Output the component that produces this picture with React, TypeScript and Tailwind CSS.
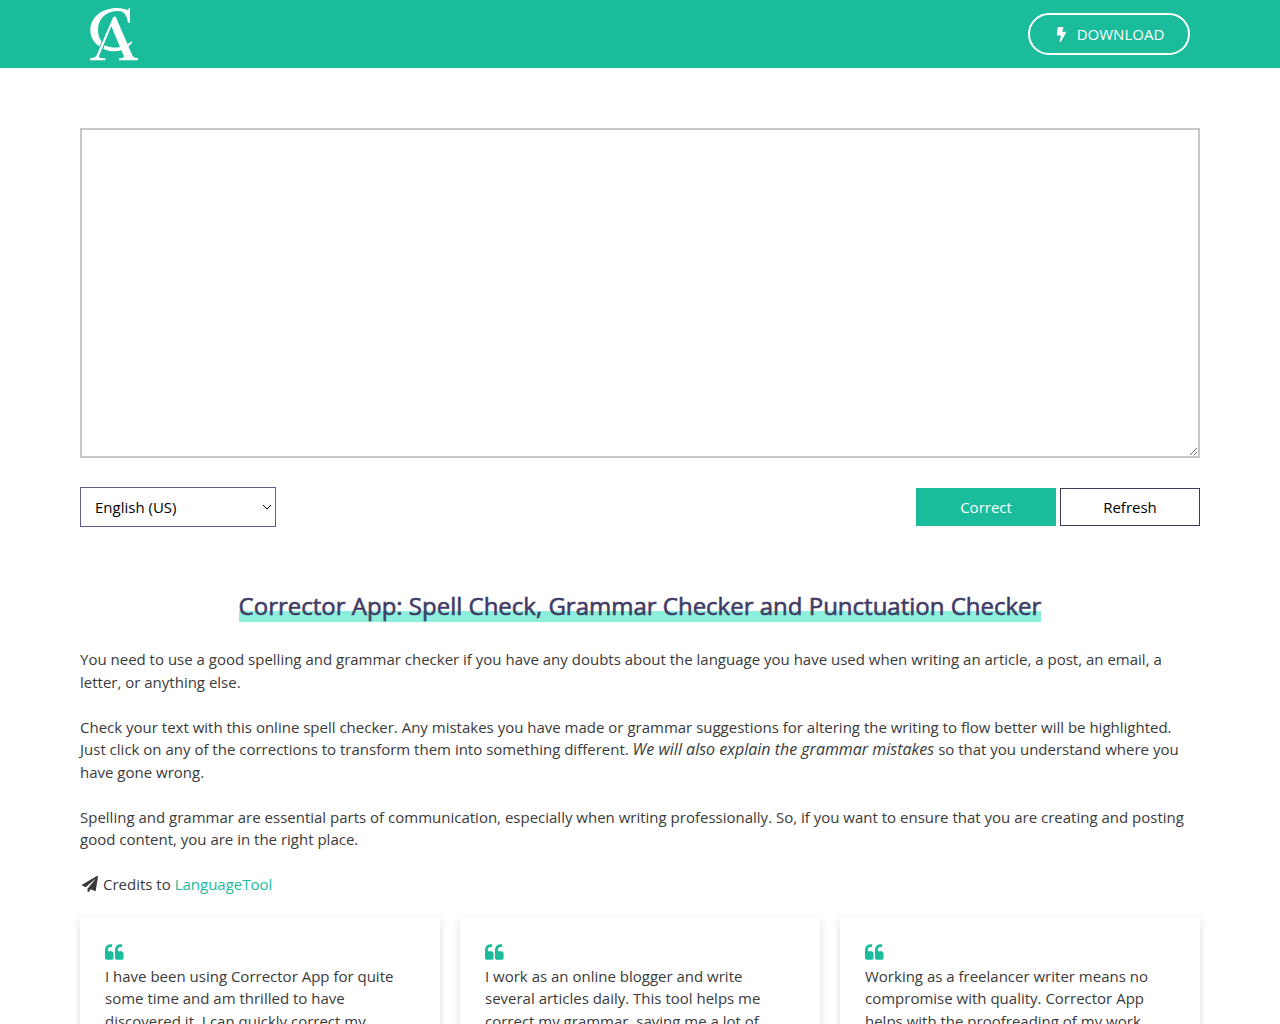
import React from "react";
import { FaBolt, FaPaperPlane } from "react-icons/fa";

const languages = ["English (US)", "English (GB)", "Deutsch", "Español", "Français", "Italiano", "Português"];

const reviews = [
  "I have been using Corrector App for quite some time and am thrilled to have discovered it. I can quickly correct my writing in just a few clicks.",
  "I work as an online blogger and write several articles daily. This tool helps me correct my grammar, saving me a lot of trouble and effort.",
  "Working as a freelancer writer means no compromise with quality. Corrector App helps with the proofreading of my work every day.",
];

function Logo() {
  return (
    <svg viewBox="30 21 150 162" className="h-[54px] w-[50px]" role="img" aria-label="Corrector App" fill="#fff">
      <path d="M150 24V68H144C140 45 132 33 116 33C78 33 54 56 54 90C54 106 59 118 67 128L61 141C42 130 31 112 31 90C31 52 66 24 112 24C126 24 136 27 141 30C144 30 146 27 147 24Z" />
      <path
        d="M100 50H107L157 166Q161 175 174 175V181H117V175Q134 175 131 167L94 79L57 168Q54 175 76 175V181H30V175Q45 175 50 166Z"
        stroke="#1abc9c"
        strokeWidth="5"
        paintOrder="stroke"
      />
      <path d="M74 136C98 147 130 146 154 124L157 127C138 155 100 161 70 146Z" />
    </svg>
  );
}

function QuoteIcon() {
  const mark =
    "M768 960v384q0 80-56 136t-136 56h-384q-80 0-136-56t-56-136v-704q0-104 40.5-198.5t109.5-163.5 163.5-109.5 198.5-40.5h64q26 0 45 19t19 45v128q0 26-19 45t-45 19h-64q-106 0-181 75t-75 181v32q0 40 28 68t68 28h224q80 0 136 56t56 136z";
  return (
    <svg viewBox="0 -64 1792 1792" className="mb-[3px] size-5" fill="#1abc9c" aria-hidden="true">
      <path d={mark} />
      <path d={mark} transform="translate(896 0)" />
    </svg>
  );
}

export default function App() {
  return (
    <div className="min-h-screen overflow-x-hidden bg-white font-['Open_Sans',sans-serif] text-[15px] leading-normal text-[#3a3a3a]">
      <header className="bg-[#1abc9c]">
        <div className="mx-auto flex h-[68px] max-w-[1120px] items-center justify-between px-2.5">
          <a href="#home">
            <Logo />
          </a>
          <a href="#download" className="flex h-[42px] w-[162px] items-center justify-center gap-2 rounded-full border-2 border-white text-white">
            <FaBolt className="size-[15px]" />
            <span>DOWNLOAD</span>
          </a>
        </div>
      </header>

      <main className="mx-auto max-w-[1120px] pt-[60px]">
        <textarea aria-label="Text to correct" className="block h-[330px] w-full border-2 border-[#c8c8c8] p-3 outline-none" />

        <div className="mt-[29px] flex items-center justify-between">
          <div className="relative">
            <select aria-label="Language" className="h-10 w-[196px] appearance-none border border-[#625e8b] bg-white px-3.5 text-black">
              {languages.map((name) => (
                <option key={name}>{name}</option>
              ))}
            </select>
            <svg viewBox="0 0 10 6" className="pointer-events-none absolute top-[17px] right-1 h-1.5 w-2.5" fill="none" stroke="#000" aria-hidden="true">
              <path d="M1 1L5 5L9 1" />
            </svg>
          </div>
          <div className="flex gap-1">
            <button type="button" className="h-[38px] w-[140px] bg-[#1abc9c] text-white">Correct</button>
            <button type="button" className="h-[38px] w-[140px] border border-[#3b3a60] bg-white text-black">Refresh</button>
          </div>
        </div>

        <h1 className="mt-[60px] text-center text-[24px] leading-[38px] text-[#3f3d66] [-webkit-text-stroke:0.6px_#3f3d66]">
          <span className="bg-linear-to-b from-transparent from-66% to-[#8deedb] to-66%">
            Corrector App: Spell Check, Grammar Checker and Punctuation Checker
          </span>
        </h1>

        <div className="mt-[23px] space-y-[1.5em]">
          <p>
            You need to use a good spelling and grammar checker if you have any doubts about the language you have used when writing an article, a post, an email, a letter, or anything else.
          </p>
          <p>
            Check your text with this online spell checker. Any mistakes you have made or grammar suggestions for altering the writing to flow better will be highlighted. Just click on any of the corrections to transform them into something different. <em className="text-[16px] leading-none">We will also explain the grammar mistakes</em> so that you understand where you have gone wrong.
          </p>
          <p>
            Spelling and grammar are essential parts of communication, especially when writing professionally. So, if you want to ensure that you are creating and posting good content, you are in the right place.
          </p>
          <p className="flex items-center gap-[5px]">
            <FaPaperPlane className="ml-0.5 size-4" />
            <span>
              Credits to <a href="#languagetool" className="text-[#1abc9c]">LanguageTool</a>
            </span>
          </p>
        </div>

        <div className="mt-[21px] grid grid-cols-3 gap-5 pb-10">
          {reviews.map((text) => (
            <blockquote key={text} className="bg-white p-[25px] shadow-[0_3px_8px_rgba(0,0,0,0.14)]">
              <QuoteIcon />
              <p>{text}</p>
            </blockquote>
          ))}
        </div>
      </main>
    </div>
  );
}
